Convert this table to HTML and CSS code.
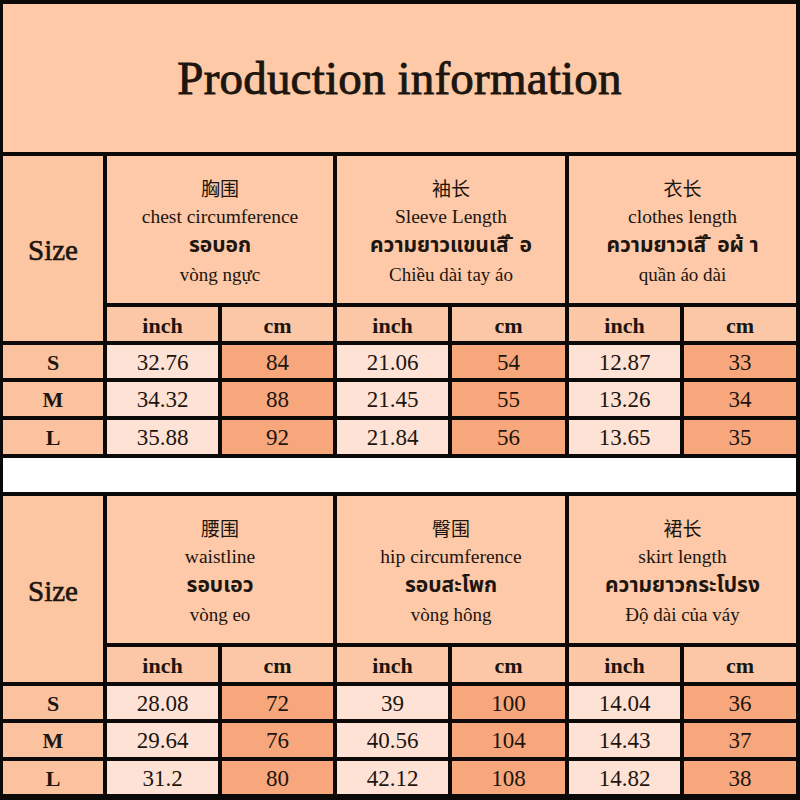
FILE: index.html
```html
<!DOCTYPE html>
<html lang="en">
<head>
<meta charset="utf-8">
<title>Production information</title>
<link rel="stylesheet" href="styles.css">
</head>
<body>
<div class="sheet">
  <div class="title">Production information</div>

  <div class="size-head">Size</div>
  <div class="cat"><span class="zh">胸围</span><span class="en">chest circumference</span><span class="th">รอบอก</span><span class="vi">vòng ngực</span></div>
  <div class="cat"><span class="zh">袖长</span><span class="en">Sleeve Length</span><span class="th">ความยาวแขนเสื ้ อ</span><span class="vi">Chiều dài tay áo</span></div>
  <div class="cat"><span class="zh">衣长</span><span class="en">clothes length</span><span class="th">ความยาวเสื ้ อผ้ า</span><span class="vi">quần áo dài</span></div>
  <div class="unit">inch</div><div class="unit">cm</div>
  <div class="unit">inch</div><div class="unit">cm</div>
  <div class="unit">inch</div><div class="unit">cm</div>

  <div class="lbl">S</div><div class="in">32.76</div><div class="cm">84</div><div class="in">21.06</div><div class="cm">54</div><div class="in">12.87</div><div class="cm">33</div>
  <div class="lbl">M</div><div class="in">34.32</div><div class="cm">88</div><div class="in">21.45</div><div class="cm">55</div><div class="in">13.26</div><div class="cm">34</div>
  <div class="lbl">L</div><div class="in">35.88</div><div class="cm">92</div><div class="in">21.84</div><div class="cm">56</div><div class="in">13.65</div><div class="cm">35</div>

  <div class="spacer"></div>

  <div class="size-head">Size</div>
  <div class="cat"><span class="zh">腰围</span><span class="en">waistline</span><span class="th">รอบเอว</span><span class="vi">vòng eo</span></div>
  <div class="cat"><span class="zh">臀围</span><span class="en">hip circumference</span><span class="th">รอบสะโพก</span><span class="vi">vòng hông</span></div>
  <div class="cat"><span class="zh">裙长</span><span class="en">skirt length</span><span class="th">ความยาวกระโปรง</span><span class="vi">Độ dài của váy</span></div>
  <div class="unit">inch</div><div class="unit">cm</div>
  <div class="unit">inch</div><div class="unit">cm</div>
  <div class="unit">inch</div><div class="unit">cm</div>

  <div class="lbl">S</div><div class="in">28.08</div><div class="cm">72</div><div class="in">39</div><div class="cm">100</div><div class="in">14.04</div><div class="cm">36</div>
  <div class="lbl">M</div><div class="in">29.64</div><div class="cm">76</div><div class="in">40.56</div><div class="cm">104</div><div class="in">14.43</div><div class="cm">37</div>
  <div class="lbl">L</div><div class="in">31.2</div><div class="cm">80</div><div class="in">42.12</div><div class="cm">108</div><div class="in">14.82</div><div class="cm">38</div>
</div>
</body>
</html>
```

FILE: styles.css
```css
html, body {
  margin: 0;
  padding: 0;
  background: #ffffff;
}

.sheet {
  width: 800px;
  height: 800px;
  box-sizing: border-box;
  background: #0c0a08;
  padding: 4px 4px 6px 3px;
  display: grid;
  grid-template-columns: 100px 111px 111px 111px 113px 111px 1fr;
  grid-template-rows: 148px 147px 34px 33px 34px 34px 34px 147px 35px 33px 34px 33px;
  gap: 4px;
  font-family: "Liberation Serif", "Noto Sans CJK SC", serif;
  color: #1c1510;
}

.sheet > div {
  display: flex;
  align-items: center;
  justify-content: center;
}

.title {
  grid-column: 1 / -1;
  background: #fdc9a7;
  font-size: 47px;
  -webkit-text-stroke: 0.9px #1c1510;
  letter-spacing: 0.2px;
}

.size-head {
  grid-row: span 2;
  background: #fcc6a3;
  font-size: 29px;
  -webkit-text-stroke: 0.6px #1c1510;
  padding-top: 4px;
}

.cat {
  grid-column: span 2;
  background: #fdc9a8;
  flex-direction: column;
  padding-top: 2px;
}

.cat span {
  display: block;
  line-height: 29px;
  white-space: pre;
}

.zh {
  font-family: "Noto Sans CJK SC", sans-serif;
  font-size: 19px;
}

.en {
  font-size: 19.5px;
}

.th {
  font-family: "Noto Sans Thai", "Noto Sans", "DejaVu Sans", sans-serif;
  font-weight: 700;
  font-size: 21px;
}

.vi {
  font-size: 19px;
}

.unit {
  background: #fcc7a6;
  font-size: 22px;
  font-weight: 700;
  padding-top: 3px;
}

.lbl {
  background: #fbc2a0;
  font-size: 22px;
  font-weight: 700;
  padding-top: 2px;
}

.in {
  background: #fde2d5;
  font-size: 23px;
  padding-top: 2px;
}

.cm {
  background: #f7a77b;
  font-size: 23px;
  padding-top: 2px;
}

.spacer {
  grid-column: 1 / -1;
  background: #ffffff;
}
```
